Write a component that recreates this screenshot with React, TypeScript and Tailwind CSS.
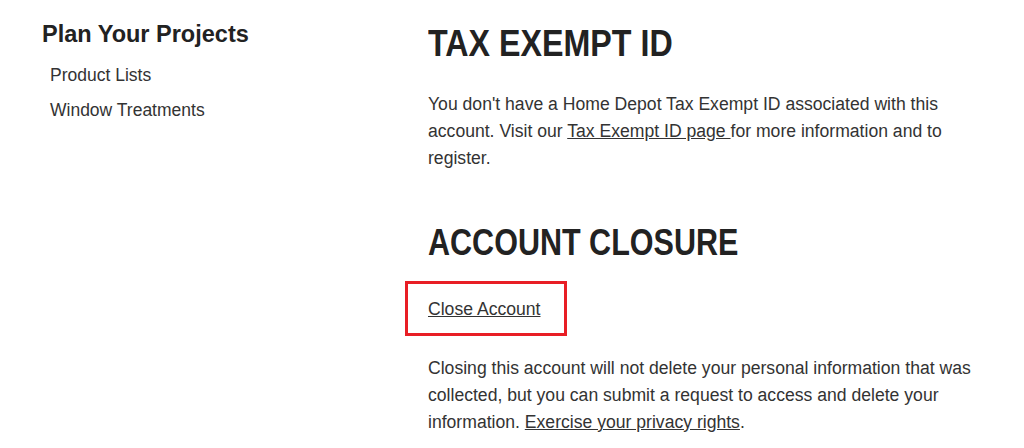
export default function App() {
  const body = "text-[17.6px] leading-[27px] text-[#333]"
  const heading =
    "inline-block origin-left whitespace-nowrap font-bold text-[36px] leading-[44px] text-[#222]"

  return (
    <div className="w-[1024px] h-[448px] bg-white overflow-hidden flex font-['Liberation_Sans',Arial,sans-serif]">
      <aside className="w-[428px] pl-[42px] pt-[19px] shrink-0">
        <h2 className="text-[23.5px] leading-[30px] font-bold text-[#222]">Plan Your Projects</h2>
        <ul className="mt-[14px] pl-[8px] space-y-[10px] text-[17.5px] leading-[25px] text-[#333]">
          <li>Product Lists</li>
          <li>Window Treatments</li>
        </ul>
      </aside>

      <main className="w-[556px] pt-[22px]">
        <section>
          <h1 className={`${heading} scale-x-[0.895]`}>TAX EXEMPT ID</h1>
          <p className={`${body} mt-[25px]`}>
            You don't have a Home Depot Tax Exempt ID associated with this account. Visit our{' '}
            <a href="#" className="underline">Tax Exempt ID page </a>for more information and to register.
          </p>
        </section>

        <section className="mt-[49px]">
          <h1 className={`${heading} scale-x-[0.848]`}>ACCOUNT CLOSURE</h1>
          <div className="mt-[16px] -ml-[23px] w-[162px] h-[55px] border-[3px] border-[#e81e25] flex items-center pl-[20px] pt-[1px]">
            <a href="#" className="text-[17.6px] text-[#333] underline">Close Account</a>
          </div>
          <p className={`${body} mt-[19px]`}>
            Closing this account will not delete your personal information that was collected, but you can submit a
            request to access and delete your information.{' '}
            <a href="#" className="underline">Exercise your privacy rights</a>.
          </p>
        </section>
      </main>
    </div>
  )
}
